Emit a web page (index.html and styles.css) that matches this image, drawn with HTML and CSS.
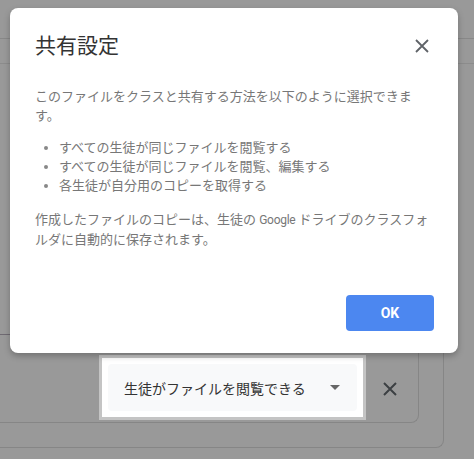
FILE: index.html
```html
<!DOCTYPE html>
<html lang="ja">
<head>
    <meta charset="UTF-8">
    <meta name="viewport" content="width=device-width, initial-scale=1.0">
    <title>共有設定</title>
    <link rel="stylesheet" href="styles.css">
</head>
<body>
    <div class="page">
        <div class="appbar"></div>
        <div class="tabs"></div>
        <div class="content"></div>
        <div class="outer-card">
            <div class="inner-card">
                <div class="share-row">
                    <div class="select-focus">
                        <div class="select-box">
                            <span>生徒がファイルを閲覧できる</span>
                            <span class="caret"></span>
                        </div>
                    </div>
                    <svg class="remove" width="14" height="14" viewBox="0 0 14 14">
                        <path d="M1 1L13 13M13 1L1 13" stroke="#3c4043" stroke-width="2" fill="none"/>
                    </svg>
                </div>
            </div>
        </div>
    </div>

    <div class="dialog">
        <div class="dialog-head">
            <h1>共有設定</h1>
            <button class="close" aria-label="閉じる">
                <svg width="14" height="14" viewBox="0 0 14 14">
                    <path d="M1 1L13 13M13 1L1 13" stroke="#5f6368" stroke-width="1.8" fill="none"/>
                </svg>
            </button>
        </div>
        <p class="intro">このファイルをクラスと共有する方法を以下のように選択できま<br>す。</p>
        <ul class="options">
            <li>すべての生徒が同じファイルを閲覧する</li>
            <li>すべての生徒が同じファイルを閲覧、編集する</li>
            <li>各生徒が自分用のコピーを取得する</li>
        </ul>
        <p class="note">作成したファイルのコピーは、生徒の <span class="latin">Google</span> ドライブのクラスフォ<br>ルダに自動的に保存されます。</p>
        <div class="dialog-actions">
            <button class="ok">OK</button>
        </div>
    </div>
</body>
</html>
```

FILE: styles.css
```css
body {
    margin: 0;
    height: 459px;
    overflow: hidden;
    background-color: #999;
    font-family: Roboto, 'Noto Sans CJK JP', sans-serif;
    color: #333;
}
.page {
    position: relative;
}
.appbar {
    height: 38px;
    border-bottom: 1px solid #888;
}
.tabs {
    height: 24px;
    border-bottom: 1px solid #8c8c8c;
}
.content {
    height: 270px;
}
.outer-card {
    width: 444px;
    box-sizing: border-box;
    border-top: 1px solid #6f6a72;
    border-right: 1px solid #868686;
    border-bottom: 1px solid #868686;
    border-radius: 0 0 8px 0;
    padding: 0 24px 24px 0;
}
.inner-card {
    border-right: 1px solid #868686;
    border-bottom: 1px solid #868686;
    border-radius: 0 0 8px 0;
    padding: 20px 21px 2px 0;
}
.share-row {
    display: flex;
    justify-content: flex-end;
    align-items: center;
    gap: 17px;
}
.select-focus {
    width: 267px;
    height: 65px;
    box-sizing: border-box;
    border: 3px solid #c4c4c4;
    background-color: white;
    padding: 6px;
}
.select-box {
    height: 100%;
    background-color: #f8f9fa;
    border-radius: 4px;
    display: flex;
    align-items: center;
    padding-left: 16px;
    font-size: 14px;
    color: #333;
}
.caret {
    width: 0;
    height: 0;
    margin-left: 24px;
    border-left: 5px solid transparent;
    border-right: 5px solid transparent;
    border-top: 5px solid #666;
}
.remove {
    display: block;
    margin-top: 2px;
}

/* ダイアログ */
.dialog {
    position: absolute;
    left: 10px;
    top: 8px;
    width: 448px;
    height: 345px;
    box-sizing: border-box;
    background-color: white;
    border-radius: 8px;
    box-shadow: 0 3px 6px rgba(0, 0, 0, 0.25);
    padding: 24px 24px 23px 25px;
}
.dialog-head {
    display: flex;
    justify-content: space-between;
    align-items: center;
}
.dialog-head h1 {
    margin: 0;
    font-size: 21px;
    line-height: 28px;
    font-weight: normal;
    color: #333;
}
.close {
    width: 24px;
    height: 24px;
    padding: 0;
    border: none;
    background: none;
    display: flex;
    align-items: center;
    justify-content: center;
    cursor: pointer;
}
.intro, .note, .options {
    font-size: 13px;
    line-height: 19px;
    color: #777;
}
.intro {
    margin: 27px 0 0;
}
.options {
    list-style: none;
    margin: 13px 0 0;
    padding-left: 9px;
}
.options li {
    display: flex;
    align-items: center;
}
.options li::before {
    content: "";
    width: 4px;
    height: 4px;
    border-radius: 50%;
    background-color: #888;
    margin-right: 11px;
}
.note {
    margin: 15px 0 0;
}
.latin {
    font-size: 12px;
    letter-spacing: -0.3px;
}
.dialog-actions {
    display: flex;
    justify-content: flex-end;
    margin-top: 46px;
}
.ok {
    width: 88px;
    height: 36px;
    border: none;
    border-radius: 4px;
    background-color: #4c87f0;
    color: white;
    font-family: Roboto, sans-serif;
    font-size: 14px;
    font-weight: bold;
    cursor: pointer;
}
```
